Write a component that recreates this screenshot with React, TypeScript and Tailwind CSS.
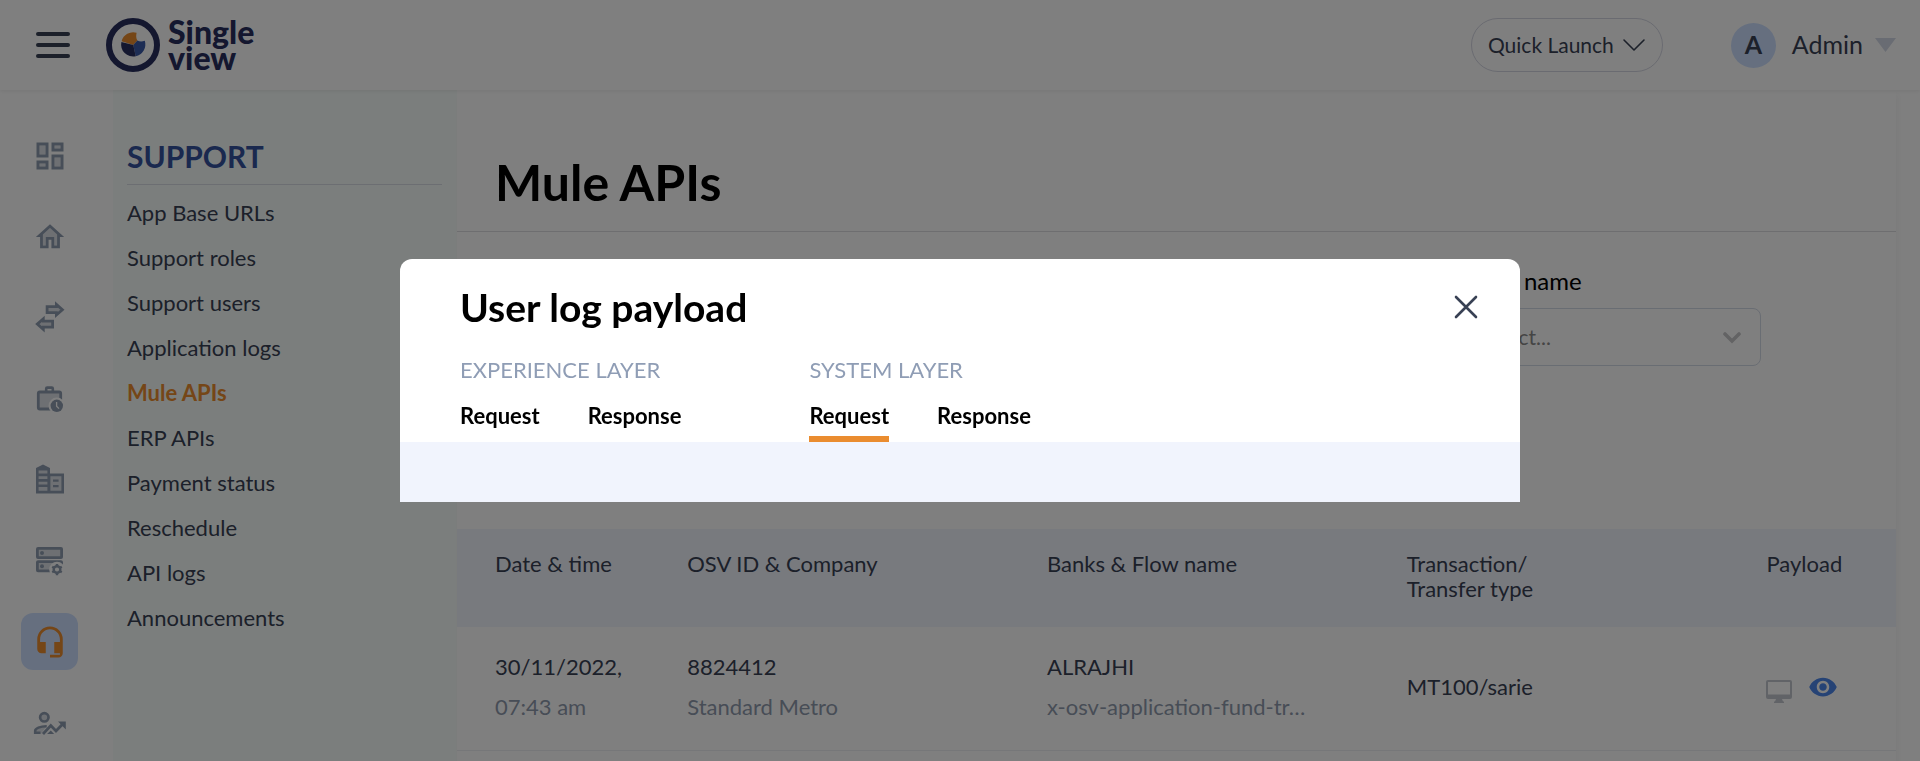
import type { ReactNode } from "react";

const menu = [
  "App Base URLs",
  "Support roles",
  "Support users",
  "Application logs",
  "Mule APIs",
  "ERP APIs",
  "Payment status",
  "Reschedule",
  "API logs",
  "Announcements",
];

function DashboardIcon() {
  return (
    <svg width="36" height="36" viewBox="0 0 24 24" fill="currentColor">
      <path opacity=".3" d="M5 5h4v6H5zm10 8h4v6h-4zM5 17h4v2H5zM15 5h4v2h-4z" />
      <path d="M3 13h8V3H3v10zm2-8h4v6H5V5zm8 16h8V11h-8v10zm2-8h4v6h-4v-6zM13 3v6h8V3h-8zm6 4h-4V5h4v2zM3 21h8v-6H3v6zm2-4h4v2H5v-2z" />
    </svg>
  );
}

function HomeIcon() {
  return (
    <svg width="34" height="34" viewBox="0 0 24 24" fill="currentColor">
      <path opacity=".3" d="M7 10.19V18h2v-6h6v6h2v-7.81l-5-4.5z" />
      <path d="M12 3L2 12h3v8h6v-6h2v6h6v-8h3L12 3zm5 15h-2v-6H9v6H7v-7.81l5-4.5 5 4.5V18z" />
    </svg>
  );
}

function TransferIcon() {
  return (
    <svg width="32" height="34" viewBox="0 0 32 34" fill="none" stroke="currentColor" strokeWidth="2.8">
      <path fill="currentColor" fillOpacity=".3" d="M13.1 5.7h9.3V3.4l6 5.3-6 5.3v-2.3h-9.3z" />
      <path fill="currentColor" fillOpacity=".3" d="M18.6 20.1H9.3v-2.3l-6 5.3 6 5.3v-2.3h9.3z" />
    </svg>
  );
}

function WorkHistoryIcon() {
  return (
    <svg width="28" height="28" viewBox="0 0 28 28" fill="none">
      <rect x="2.3" y="7" width="22.4" height="17" rx="1.5" stroke="currentColor" strokeWidth="2.8" fill="currentColor" fillOpacity=".3" />
      <path d="M10.2 7V3.6q0-1 1-1h4.6q1 0 1 1V7" stroke="currentColor" strokeWidth="2.6" />
      <circle cx="20.8" cy="20.8" r="8.2" fill="white" />
      <circle cx="20.8" cy="20.8" r="6.2" fill="currentColor" />
      <path d="M20.6 17v4.2l2.4 2.4" stroke="white" strokeWidth="1.3" />
    </svg>
  );
}

function BuildingIcon() {
  return (
    <svg width="30" height="32" viewBox="0 0 30 32" fill="none">
      <path d="M1 4l7-3.5L15 4v5.5h14v20H1z" fill="currentColor" />
      <path d="M3.6 6.5h8.8v3H3.6zM3.6 12.2h8.8v2.8H3.6zM3.6 17.8h8.8v2.6H3.6zM3.6 23h8.8v3.8H3.6zM15.4 12.2h11v14.6h-11z" fill="#dde1e7" />
      <path d="M18 15.6h5.6v2.2H18zM18 21h5.6v2.2H18z" fill="currentColor" />
    </svg>
  );
}

function ServerIcon() {
  return (
    <svg width="30" height="30" viewBox="0 0 30 30" fill="none">
      <g stroke="currentColor" strokeWidth="2.8" fill="currentColor">
        <rect x="2.4" y="2.4" width="24.2" height="9.2" rx=".6" fillOpacity=".3" />
        <rect x="2.4" y="15.6" width="24.2" height="9.2" rx=".6" fillOpacity=".3" />
      </g>
      <circle cx="7" cy="7" r="2" fill="currentColor" />
      <circle cx="7" cy="20.2" r="2" fill="currentColor" />
      <circle cx="22" cy="23.5" r="7.8" fill="white" />
      <circle cx="22" cy="23.5" r="3.3" stroke="currentColor" strokeWidth="2.4" />
      <path
        d="M22 18v2M22 27v2.2M17.2 20.8l1.8 1M25 25.2l1.8 1M17.2 26.2l1.8-1M25 21.8l1.8-1"
        stroke="currentColor"
        strokeWidth="2.4"
      />
    </svg>
  );
}

function HeadsetIcon() {
  return (
    <svg width="34" height="34" viewBox="0 0 24 24" fill="currentColor">
      <path d="M12 1a9 9 0 0 0-9 9v7c0 1.66 1.34 3 3 3h3v-8H5v-2c0-3.87 3.13-7 7-7s7 3.13 7 7v2h-4v8h4v1h-7v2h6c1.66 0 3-1.34 3-3V10a9 9 0 0 0-9-9z" />
    </svg>
  );
}

function TrendIcon() {
  return (
    <svg width="34" height="24" viewBox="0 0 34 24" fill="none">
      <circle cx="11.3" cy="6.3" r="4.2" stroke="currentColor" strokeWidth="2.7" fill="currentColor" fillOpacity=".3" />
      <path d="M8 23H1.5v-3.2c0-3 5-5 12.5-5.2z" fill="currentColor" fillOpacity=".3" />
      <path d="M7.5 21.8H2.2v-2c0-2.4 4.8-4.6 11.5-4.6" stroke="currentColor" strokeWidth="2.6" />
      <path d="M10 23l7.8-8.5L23 20l7-7.2" stroke="currentColor" strokeWidth="2.8" />
      <path d="M25 10.5h7.8v8zM14 23l3.8-3.6L21.2 23z" fill="currentColor" />
    </svg>
  );
}

const rail: { label: string; icon: ReactNode; active?: boolean }[] = [
  { label: "Dashboard", icon: <DashboardIcon /> },
  { label: "Home", icon: <HomeIcon /> },
  { label: "Transfers", icon: <TransferIcon /> },
  { label: "Work history", icon: <WorkHistoryIcon /> },
  { label: "Companies", icon: <BuildingIcon /> },
  { label: "Servers", icon: <ServerIcon /> },
  { label: "Support", icon: <HeadsetIcon />, active: true },
  { label: "User activity", icon: <TrendIcon /> },
];

function Logo() {
  return (
    <a href="#home" className="flex items-center gap-2 text-[#282e5e]">
      <svg width="54" height="54" viewBox="0 0 54 54" fill="none">
        <circle cx="27" cy="27" r="24" stroke="currentColor" strokeWidth="6" />
        <path d="M27.3 27L15.6 23.3A12 12 0 0 1 30.6 14.8Q29.5 20 31.4 22.5z" fill="#ea8c2f" />
        <path d="M27.3 27L31.4 22.5Q34.5 24.2 38.8 22.8A12 12 0 0 1 29.7 38.3z" fill="#3a5aa8" />
        <path d="M27.3 27L29.7 38.3A12 12 0 0 1 15.4 24z" fill="currentColor" />
      </svg>
      <span className="text-[32px] leading-[26px] font-black">
        Single
        <br />
        view
      </span>
    </a>
  );
}

function Header() {
  return (
    <header className="relative flex h-[90px] items-center justify-between bg-white pr-6 pl-9 shadow-[0_1px_4px_rgba(0,0,0,0.08)]">
      <div className="flex items-center gap-9">
        <button aria-label="Toggle menu" className="flex flex-col gap-[7px]">
          <span className="h-1 w-[34px] rounded-full bg-current" />
          <span className="h-1 w-[34px] rounded-full bg-current" />
          <span className="h-1 w-[34px] rounded-full bg-current" />
        </button>
        <Logo />
      </div>
      <div className="flex items-center gap-[68px]">
        <button className="flex h-[54px] items-center gap-2 rounded-full border border-[#d4d6e2] px-4 text-[21px]">
          Quick Launch
          <svg width="24" height="14" viewBox="0 0 24 14" fill="none" stroke="currentColor" strokeWidth="1.6" strokeLinecap="round" strokeLinejoin="round">
            <path d="M2 2l10 10L22 2" />
          </svg>
        </button>
        <button className="flex items-center gap-3 text-[25px]">
          <span className="flex size-[45px] items-center justify-center rounded-full bg-[#cddfff] font-bold">A</span>
          <span className="ml-1">Admin</span>
          <svg width="21" height="14" viewBox="0 0 21 14" fill="#d3d9e6">
            <path d="M0 0h21L10.5 14z" />
          </svg>
        </button>
      </div>
    </header>
  );
}

function PayloadTable() {
  return (
    <table className="w-full table-fixed text-left">
      <colgroup>
        <col className="w-[16%]" />
        <col className="w-1/4" />
        <col className="w-1/4" />
        <col className="w-1/4" />
        <col />
      </colgroup>
      <thead className="bg-[#f1f4fc] align-top">
        <tr>
          <th className="pt-[22px] pb-[26px] pl-[38px] leading-[25px] font-normal">Date &amp; time</th>
          <th className="pt-[22px] pb-[26px] leading-[25px] font-normal">OSV ID &amp; Company</th>
          <th className="pt-[22px] pb-[26px] leading-[25px] font-normal">Banks &amp; Flow name</th>
          <th className="pt-[22px] pb-[26px] leading-[25px] font-normal">
            Transaction/
            <br />
            Transfer type
          </th>
          <th className="pt-[22px] pb-[26px] leading-[25px] font-normal">Payload</th>
        </tr>
      </thead>
      <tbody>
        <tr className="border-b border-[#eceef2] leading-10">
          <td className="pt-5 pb-[23px] pl-[38px]">
            <div>30/11/2022,</div>
            <div className="text-[#8f9aad]">07:43 am</div>
          </td>
          <td className="pt-5 pb-[23px]">
            <div>8824412</div>
            <div className="text-[#8f9aad]">Standard Metro</div>
          </td>
          <td className="pt-5 pb-[23px]">
            <div>ALRAJHI</div>
            <div className="text-[#8f9aad]">x-osv-application-fund-tr…</div>
          </td>
          <td className="pt-5 pb-[23px]">MT100/sarie</td>
          <td className="pt-5 pb-[23px]">
            <div className="flex items-center gap-4">
              <button aria-label="Open on desktop" className="pt-2 text-[#c3c7cf]">
                <svg width="26" height="23" viewBox="0 0 26 23" fill="currentColor">
                  <path fillRule="evenodd" d="M2 0h22q2 0 2 2v15q0 2-2 2h-8l1 2.5h1V23H8v-1.5h1L10 19H2q-2 0-2-2V2Q0 0 2 0zM2 2v12.5h22V2z" />
                </svg>
              </button>
              <button aria-label="View payload" className="text-[#4c86ea]">
                <svg width="30" height="30" viewBox="0 0 24 24" fill="currentColor">
                  <path d="M12 4.5C7 4.5 2.73 7.61 1 12c1.73 4.39 6 7.5 11 7.5s9.27-3.11 11-7.5c-1.73-4.39-6-7.5-11-7.5zM12 17c-2.76 0-5-2.24-5-5s2.24-5 5-5 5 2.24 5 5-2.24 5-5 5zm0-8c-1.66 0-3 1.34-3 3s1.34 3 3 3 3-1.34 3-3-1.34-3-3-3z" />
                </svg>
              </button>
            </div>
          </td>
        </tr>
      </tbody>
    </table>
  );
}

function TabGroup({ title, active }: { title: string; active?: string }) {
  return (
    <div>
      <h3 className="leading-[30px] text-[#8f9db5]">{title}</h3>
      <div className="mt-4 flex gap-12">
        {["Request", "Response"].map((tab) => (
          <button
            key={tab}
            className={
              tab === active
                ? "border-b-[6px] border-[#ea8c2f] pb-[5px] leading-[30px] font-bold text-black"
                : "border-b-[6px] border-transparent pb-[5px] leading-[30px] font-bold text-black"
            }
          >
            {tab}
          </button>
        ))}
      </div>
    </div>
  );
}

function PayloadDialog() {
  return (
    <div className="fixed inset-0 flex items-center justify-center bg-black/50">
      <div role="dialog" aria-labelledby="payload-title" className="w-7/12 overflow-hidden rounded-t-xl bg-white">
        <div className="px-[60px] pt-6">
          <div className="-mr-5 flex items-center justify-between">
            <h2 id="payload-title" className="text-[39px] leading-[48px] font-bold text-black">
              User log payload
            </h2>
            <button aria-label="Close" className="p-0.5">
              <svg width="24" height="24" viewBox="0 0 24 24" fill="none" stroke="currentColor" strokeWidth="2.6" strokeLinecap="round">
                <path d="M2 2l20 20M22 2L2 22" />
              </svg>
            </button>
          </div>
          <div className="mt-6 flex gap-32">
            <TabGroup title="EXPERIENCE LAYER" />
            <TabGroup title="SYSTEM LAYER" active="Request" />
          </div>
        </div>
        <div className="h-[60px] bg-[#f1f4fd]" />
      </div>
    </div>
  );
}

export default function App() {
  return (
    <div className="flex min-h-screen flex-col bg-white font-['Lato','Open_Sans',sans-serif] text-[22px] text-[#384154]">
      <Header />
      <div className="flex flex-1">
        <nav aria-label="Main" className="flex w-[113px] shrink-0 flex-col gap-6 pt-[37px] pl-[21px] text-[#8f9db0]">
          {rail.map((item) => (
            <a
              key={item.label}
              href="#section"
              aria-label={item.label}
              className={
                item.active
                  ? "flex size-[57px] items-center justify-center rounded-xl bg-[#cddfff] text-[#ea8c2f]"
                  : "flex size-[57px] items-center justify-center"
              }
            >
              {item.icon}
            </a>
          ))}
        </nav>
        <aside className="w-[344px] shrink-0 bg-[#f7fcfa] pt-12 pr-[15px] pl-[14px]">
          <h2 className="border-b border-[#d8dde4] pb-[10px] text-[30px] leading-9 font-bold text-[#34529e]">SUPPORT</h2>
          <ul className="mt-[5px]">
            {menu.map((name) => (
              <li key={name}>
                <a
                  href="#menu"
                  className={
                    name === "Mule APIs"
                      ? "block leading-[45px] font-bold text-[#ea8c2f]"
                      : "block leading-[45px]"
                  }
                >
                  {name}
                </a>
              </li>
            ))}
          </ul>
        </aside>
        <main className="min-w-0 flex-1 pr-6">
          <div className="h-full shadow-[3px_4px_6px_rgba(0,0,0,0.03)]">
            <h1 className="border-b border-[#dcdde0] pt-[60px] pb-[17px] pl-[38px] text-[50px] leading-[64px] font-bold text-black">
              Mule APIs
            </h1>
            <div className="grid grid-cols-4 gap-[30px] pt-[34px] pr-[135px] pb-[163px] pl-[38px]">
              <div className="col-start-4 flex flex-col gap-3">
                <label htmlFor="flow-name" className="text-[24px] leading-[30px] text-black">
                  Flow name
                </label>
                <div className="relative">
                  <select
                    id="flow-name"
                    className="h-[58px] w-full appearance-none rounded-lg border border-[#d3dae6] bg-white px-3 text-[21px] text-[#8a8a8a]"
                  >
                    <option>Select...</option>
                  </select>
                  <svg
                    className="pointer-events-none absolute top-6 right-5"
                    width="18"
                    height="12"
                    viewBox="0 0 18 12"
                    fill="none"
                    stroke="#c6c6c9"
                    strokeWidth="3.6"
                    strokeLinecap="round"
                  >
                    <path d="M2 2l7 7 7-7" />
                  </svg>
                </div>
              </div>
            </div>
            <PayloadTable />
          </div>
        </main>
      </div>
      <PayloadDialog />
    </div>
  );
}
